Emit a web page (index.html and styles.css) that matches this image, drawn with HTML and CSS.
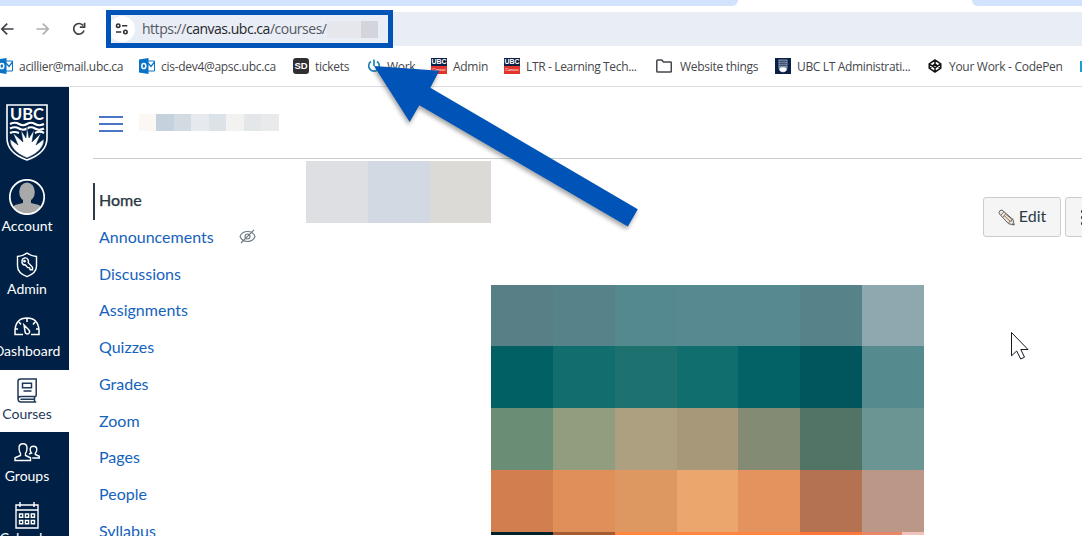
FILE: index.html
```html
<!DOCTYPE html>
<html lang="en">
<head>
<meta charset="utf-8">
<title>Canvas course home</title>
<link rel="stylesheet" href="styles.css">
</head>
<body>
<div class="screen">
  <header class="browser">
    <div class="tabs"><div class="tab-left"></div><div class="tab-right"></div></div>
    <div class="toolbar">
      <svg class="nav-icons" width="106" height="46" viewBox="0 6 106 46" fill="none" stroke="#3f4145" stroke-width="1.7">
        <path d="M13.5 29H2M7.2 23.6L1.8 29l5.4 5.4"/>
        <path d="M36.500 29H48M42.800 23.600L48.200 29l-5.400 5.400" stroke="#adb0b3"/>
        <path d="M83.200 25.600A5.300 5.300 0 1 0 84 30.500M84.600 22.800v4.400h-4.800"/>
      </svg>
      <div class="address">
        <span class="site-info">
          <svg width="14" height="14" viewBox="0 0 14 14" fill="none" stroke="#303236" stroke-width="1.6"><circle cx="3.200" cy="3.700" r="1.700"/><path d="M7 3.700h5.300M1 10h5.300"/><circle cx="10.400" cy="10" r="1.700"/></svg>
        </span>
        <span class="url"><span class="scheme">https://</span>canvas.ubc.ca<span class="path">/courses/</span></span>
        <span class="redact"></span>
      </div>
    </div>
    <nav class="bookmarks">
      <a class="bm"><svg width="16" height="16" viewBox="0 0 16 16"><path d="M8 3h7.500v10H8z" fill="#fff" stroke="#0873c7"/><path d="M9 5l3 3.500L15.500 4" fill="none" stroke="#0873c7" stroke-width="1.300"/><path d="M0 1.500L9.500 0v16L0 14.500z" fill="#0873c7"/><ellipse cx="4.800" cy="8" rx="2" ry="2.600" fill="none" stroke="#fff" stroke-width="1.500"/></svg><span>acillier@mail.ubc.ca</span></a>
      <a class="bm"><svg width="16" height="16" viewBox="0 0 16 16"><path d="M8 3h7.500v10H8z" fill="#fff" stroke="#0873c7"/><path d="M9 5l3 3.500L15.500 4" fill="none" stroke="#0873c7" stroke-width="1.300"/><path d="M0 1.500L9.500 0v16L0 14.500z" fill="#0873c7"/><ellipse cx="4.800" cy="8" rx="2" ry="2.600" fill="none" stroke="#fff" stroke-width="1.500"/></svg><span>cis-dev4@apsc.ubc.ca</span></a>
      <a class="bm"><span class="sd">SD</span><span>tickets</span></a>
      <a class="bm tight"><svg width="16" height="16" viewBox="0 0 16 16" fill="none" stroke="#2483b5" stroke-width="1.700"><path d="M4 3.500a5.300 5.300 0 1 0 6 0M7 1.500v6.500"/></svg><span>Work</span></a>
      <a class="bm"><span class="fav"><b>UBC</b><i>Canvas</i></span><span>Admin</span></a>
      <a class="bm"><span class="fav"><b>UBC</b><i>Canvas</i></span><span class="ltr">LTR - Learning Tech...</span></a>
      <a class="bm wide"><svg width="16" height="14" viewBox="0 0 16 14" fill="none" stroke="#444649" stroke-width="1.500"><path d="M.8 12.200V1.800Q.8 1 1.600 1h4.200l1.700 2h7q.8 0 .8.800v8.400q0 .8-.8.800H1.600q-.8 0-.8-.8z"/></svg><span>Website things</span></a>
      <a class="bm"><svg width="16" height="16" viewBox="0 0 16 16"><path fill="#0b2046" d="M0 0h16v16H0z"/><path d="M3.500 1.500h9v8q0 3.500-4.500 5-4.500-1.500-4.500-5z" fill="#8794aa"/><path d="M4 3.500h8M4 5.500h8M4 7.500h8M6 2v6M8 2v6M10 2v6" stroke="#263c61" stroke-width=".6"/><ellipse cx="8" cy="11.500" rx="3.500" ry="2.300" fill="#fff"/></svg><span class="ubc-lt">UBC LT Administrati...</span></a>
      <a class="bm"><svg width="16" height="16" viewBox="0 0 16 16" fill="none" stroke="#151515" stroke-width="1.500" stroke-linejoin="round"><path d="M8 2l5.800 3.800v4.400L8 14l-5.800-3.800V5.800zM2.200 5.800L8 9.800l5.800-4M2.200 10.200L8 6.200l5.800 4M8 2v4.200M8 9.800V14"/></svg><span>Your Work - CodePen</span></a>
      <a class="bm"><span class="blue"></span></a>
    </nav>
  </header>

  <div class="app">
    <aside class="rail">
      <svg class="crest" width="42" height="58" viewBox="0 0 42 58">
        <path d="M1 1h40v33q0 15-20 22Q1 49 1 34z" fill="none" stroke="#fff" stroke-width="1.600"/>
        <text x="4" y="16" textLength="34" lengthAdjust="spacingAndGlyphs">UBC</text>
        <path d="M4 20q5-2.500 9 0t8 0 8 0 9 0M4 24.500q5-2.500 9 0t8 0 8 0 9 0M4 29q4-2 9 0m16 0q5-2.500 9 0" fill="none" stroke="#fff" stroke-width="2.200"/>
        <path d="M4 35l8 6-5-12 10 9-2-12 5 8 1-11 2 11 5-8-2 12 9-9-5 12 8-6q0 12-17 19Q4 47 4 35z" fill="#fff" stroke="#002145" stroke-width=".5"/>
      </svg>
      <a class="item account"><svg width="36" height="36" viewBox="0 0 36 36"><defs><clipPath id="avatar"><circle cx="18" cy="18" r="17"/></clipPath></defs><circle cx="18" cy="18" r="17" fill="#002145"/><g clip-path="url(#avatar)" fill="#a9a9a9"><ellipse cx="18" cy="13" rx="7.800" ry="9.500"/><path d="M14 20h8v4l8 2 4 4v6H2v-6l4-4 8-2z"/></g><circle cx="18" cy="18" r="17.200" fill="none" stroke="#fff" stroke-width="1.700"/></svg><span>Account</span></a>
      <a class="item admin"><svg width="22" height="26" viewBox="0 0 22 26" fill="none" stroke="#fff" stroke-width="1.400"><path d="M11 1q4 3 9.500 3.500V14q0 7-9.500 10.700Q1.500 21 1.500 14V4.500Q7 4 11 1z"/><path d="M6 8.500a3.200 3.200 0 0 1 6-.8q.8 1.500.2 3l4.300 4.500v2.600h-2.300l-.7-2-2-.4-2-2.400q-3 .2-3.500-2.500z"/><circle cx="8.500" cy="9.200" r=".7"/></svg><span>Admin</span></a>
      <a class="item dash"><svg width="26" height="19" viewBox="0 0 26 19" fill="none" stroke="#fff" stroke-width="1.500"><path d="M9 17.500H1V13Q2 1 13 1t12 12v4.500h-8M13 1v4M5 5l2 2.500M21 5l-2 2.500M1 12h3M22 12h3"/><path d="M10 8l1.200 7.500a2.300 2.300 0 1 0 3.500-2.700z"/></svg><span>Dashboard</span></a>
      <a class="item active"><svg width="20" height="25" viewBox="0 0 20 25" fill="none" stroke="#1f3958" stroke-width="1.500"><path d="M19.200 18.500V1H3.500Q1 1 1 3.500v17Q1 24 4 24h15.200M19 18.500H4q-3 0-3 2.500M3.500 21.300H18M17.500 18.500V24M5.500 5.200h9v4.500h-9zM6.500 13h8"/></svg><span>Courses</span></a>
      <a class="item groups"><svg width="26" height="19" viewBox="0 0 26 19" fill="none" stroke="#fff" stroke-width="1.400"><path d="M1 17.500v-2.700l5.500-2.300v-2Q5 8.500 5 5q0-4.300 4-4.300T13 5q0 3.500-1.500 5.500v2l5 2.300v2.700z"/><path d="M15 11l2.500-1q-1.300-1.200-1.300-3.500 0-3.300 3.300-3.300t3.300 3.300q0 2.300-1.500 3.700v1.300l4 1.800V15h-7"/></svg><span>Groups</span></a>
      <a class="item cal"><svg width="24" height="27" viewBox="0 0 24 27" fill="none" stroke="#fff" stroke-width="1.400"><path d="M1 3h22v23H1zM1 8h22M5 0v5M19 0v5"/><path d="M4.500 12h3.200v3.200H4.500zm5.900 0h3.200v3.200h-3.200zm5.900 0h3.200v3.200h-3.200zM4.500 18.500h3.200v3.200H4.500zm5.900 0h3.200v3.200h-3.200zm5.900 0h3.200v3.200h-3.200z"/></svg><span>Calendar</span></a>
    </aside>

    <main class="main">
      <div class="crumbs"><span class="burger"><i></i><i></i><i></i></span><span class="crumb-redact"></span></div>
      <div class="body">
        <nav class="course-nav">
          <a class="current"><span>Home</span></a>
          <a><span>Announcements</span><svg width="17" height="15" viewBox="0 0 17 15" fill="none" stroke="#6a7883" stroke-width="1.100"><path d="M1 7.500Q3 2.500 8.500 2.500T16 7.500q-2 5-7.500 5T1 7.500zM2 14L15 .8"/><circle cx="8.500" cy="7.500" r="2.500"/></svg></a>
          <a><span>Discussions</span></a><a><span>Assignments</span></a><a><span>Quizzes</span></a><a><span>Grades</span></a><a><span>Zoom</span></a><a><span>Pages</span></a><a><span>People</span></a><a><span>Syllabus</span></a>
        </nav>
        <section class="content">
          <div class="title-redact"></div>
          <div class="mosaic">
            <i class="c11"></i><i class="c12"></i><i class="c13"></i><i class="c14"></i><i class="c15"></i><i class="c16"></i><i class="c17"></i>
            <i class="c21"></i><i class="c22"></i><i class="c23"></i><i class="c24"></i><i class="c25"></i><i class="c26"></i><i class="c27"></i>
            <i class="c31"></i><i class="c32"></i><i class="c33"></i><i class="c34"></i><i class="c35"></i><i class="c36"></i><i class="c37"></i>
            <i class="c41"></i><i class="c42"></i><i class="c43"></i><i class="c44"></i><i class="c45"></i><i class="c46"></i><i class="c47"></i>
            <i class="c51"></i><i class="c52"></i><i class="c53"></i><i class="c53"></i><i class="c53"></i><i class="c56"></i><i class="c57"></i>
          </div>
        </section>
        <div class="actions">
          <a class="btn"><svg width="17" height="17" viewBox="0 0 17 17" fill="none" stroke="#56616b" stroke-width="1"><path d="M1 3.500Q1.500 1 4 1l11 9.500 1.200 5.500-5.700-1.300L1.500 5z" fill="#f0e8dc"/><path d="M3 6L6 2.700M5 8l3-3.500M10.500 14.500l1-2.200 2-.2.200-2 1.500-.1M6 6.500l6 5.500M7.500 5l6 5" stroke="#8a7360"/><path d="M14.500 14.500l1.500 1.500"/></svg><span>Edit</span></a>
          <a class="btn more"><i></i><i></i><i></i></a>
        </div>
      </div>
    </main>
  </div>

  <div class="highlight"></div>
  <svg class="overlay" width="1082" height="536" viewBox="0 0 1082 536">
    <path class="arrow" d="M374 66L439.300 70.700 430.300 87.700 637.800 209.300 627.800 226.500 419.300 105.300 409.700 122z"/>
    <path d="M1011.500 332.500v23.300l5.200-4.800 4 8 3.800-1.800-3.700-7.700h7.200z" fill="#fff" stroke="#17171f" stroke-width="1"/>
  </svg>
</div>
</body>
</html>
```
FILE: styles.css
```css
* { box-sizing: border-box; }
body { margin: 0; background: #fff; }
.screen { position: relative; width: 1082px; height: 536px; overflow: hidden; font-family: Lato, "Liberation Sans", sans-serif; }

.browser { height: 87px; border-bottom: 1px solid #dcdee0; font-family: "Open Sans", "Noto Sans", sans-serif; color: #45474b; }
.tabs { display: flex; justify-content: space-between; height: 6px; }
.tab-left { width: 738px; background: #d3e3fd; border-bottom-right-radius: 8px; }
.tab-right { width: 110px; background: #d3e3fd; border-bottom-left-radius: 8px; }
.toolbar { display: flex; height: 46px; }
.nav-icons { flex: none; }
.address { flex: 1; display: flex; align-items: center; height: 34px; margin-top: 6px; background: #e9edf6; border-radius: 17px 0 0 17px; }
.site-info { display: flex; align-items: center; justify-content: center; width: 26px; height: 26px; margin-left: 3px; border-radius: 50%; background: #fff; }
.url { flex: none; width: 185px; margin-left: 7px; font-size: 14px; line-height: 20px; letter-spacing: -.48px; white-space: nowrap; color: #25272b; }
.scheme, .path { color: #55585e; }
.redact { width: 51px; height: 17px; background: linear-gradient(90deg, #e5e7ec 34px, #d3d4dc 34px); }

.bookmarks { display: grid; grid-template-columns: 142px 154px 74px 64px 73px 152px 119px 152px 153px 16px; height: 28px; margin-left: -3px; font-size: 12px; letter-spacing: -.29px; }
.bm { display: flex; align-items: center; gap: 6px; white-space: nowrap; }
.bm svg { flex: none; }
.bm.tight { gap: 4px; }
.bm.wide { gap: 8px; }
.ltr, .ubc-lt { letter-spacing: -.35px; }
.sd { width: 16px; height: 16px; border-radius: 3px; background: #303033; color: #fff; font: bold 9.5px/16px "Liberation Sans", sans-serif; letter-spacing: 0; text-align: center; }
.fav { display: flex; flex-direction: column; width: 16px; height: 16px; color: #fff; text-align: center; font-family: "Liberation Sans", sans-serif; letter-spacing: 0; }
.fav b { height: 8px; background: #0b2046; font-size: 7px; line-height: 8px; }
.fav i { height: 8px; background: #e1352e; font-size: 4px; line-height: 8px; }
.blue { width: 16px; height: 11px; background: #1a9fd4; }

.app { display: flex; height: 449px; }
.rail { flex: none; display: flex; flex-direction: column; align-items: center; width: 84px; margin-left: -15px; padding-top: 17px; background: #002145; }
.crest { flex: none; }
.crest text { font: bold 17px Lato, sans-serif; fill: #fff; }
.item { flex: none; display: flex; flex-direction: column; align-items: center; justify-content: space-between; width: 84px; color: #fff; font-size: 14px; line-height: 18px; }
.account { height: 56px; margin-top: 17px; }
.admin { height: 46px; margin-top: 17px; }
.dash { height: 43px; margin-top: 19px; }
.active { height: 62px; margin-top: 10px; padding: 8px 0 9px; background: #fff; color: #1f3958; }
.groups { height: 42px; margin-top: 11px; }
.cal { height: 45px; margin-top: 17px; }

.main { flex: 1; padding-left: 24px; }
.crumbs { display: flex; height: 72px; padding: 27px 0 0 6px; border-bottom: 1px solid #c7cdd1; }
.burger { display: flex; flex-direction: column; justify-content: space-between; width: 24px; height: 16px; margin-top: 2px; }
.burger i { height: 2px; background: #4a75c4; }
.crumb-redact { width: 140px; height: 17px; margin-left: 16px; background: linear-gradient(90deg, #fbf7f3 17px, #c5d1dc 17px 35px, #d2dae2 35px 52px, #e6e9ed 52px 70px, #dbe3e8 70px 87px, #f2f2f1 87px 105px, #e3e7e9 105px 122px, #e9eaec 122px); }
.body { display: flex; height: 377px; }
.course-nav { flex: none; width: 213px; padding-top: 24px; }
.course-nav a { display: flex; align-items: center; gap: 25px; height: 36.780px; padding-left: 6px; font-size: 16px; line-height: 20px; color: #1562bd; }
.course-nav span { margin-bottom: 2.600px; }
.course-nav svg { margin-top: -3px; }
.course-nav .current { border-left: 2px solid #2d3b45; padding-left: 4px; color: #2d3b45; font-weight: 500; -webkit-text-stroke: .25px #2d3b45; }
.content { flex: none; width: 618px; padding-top: 2px; }
.title-redact { width: 185px; height: 62px; background: linear-gradient(90deg, #dedfe2 62px, #d3d9e3 62px 122px, #d3dade 124px, #dbdad7 125px); }
.mosaic { display: grid; grid-template-columns: 62px 62px 62px 61px 62px 62px 62px; grid-template-rows: 61px 62px 62px 62px 3px; margin: 62px 0 0 185px; }
.c11 { background: #587f86; } .c12 { background: #56838a; } .c13 { background: #558990; } .c14, .c15 { background: #568a90; } .c16 { background: #568289; } .c17 { background: #8da9af; }
.c21 { background: #006063; } .c22 { background: #116d6e; } .c23 { background: #1d716e; } .c24 { background: #106f6e; } .c25 { background: #026265; } .c26 { background: #00565c; } .c27 { background: #558a8f; }
.c31 { background: #698e75; } .c32 { background: #929d80; } .c33 { background: #ada080; } .c34 { background: #a69879; } .c35 { background: #838b75; } .c36 { background: #527466; } .c37 { background: #6b9592; }
.c41 { background: #d27e4e; } .c42 { background: #e18f59; } .c43 { background: #dd9861; } .c44 { background: #eaa66c; } .c45 { background: #e4935e; } .c46 { background: #b57252; } .c47 { background: #ba9787; }
.c51 { background: #00222c; } .c52 { background: #a55c32; } .c53 { background: #ff8540; } .c56 { background: #ff773a; } .c57 { background: linear-gradient(90deg, #e98769 40px, #f0c4b8 40px); }
.actions { flex: none; display: flex; gap: 4px; margin-top: 38px; padding-left: 59px; }
.btn { flex: none; display: flex; align-items: center; justify-content: center; gap: 4px; width: 78px; height: 40px; border: 1px solid #c7cdd1; border-radius: 3px; background: #f5f5f5; color: #2d3b45; font-size: 16px; line-height: 20px; }
.btn span { margin-bottom: 3px; }
.more { flex-direction: column; gap: 3px; width: 34px; }
.more i { width: 3px; height: 3px; border-radius: 1px; background: #2d3b45; }

.highlight { position: absolute; left: 106px; top: 10px; width: 287px; height: 38px; border: 5px solid #0054b8; }
.overlay { position: absolute; left: 0; top: 0; }
.arrow { fill: #0054b8; filter: drop-shadow(-1px 3px 2px rgba(0,0,0,.35)); }
```
